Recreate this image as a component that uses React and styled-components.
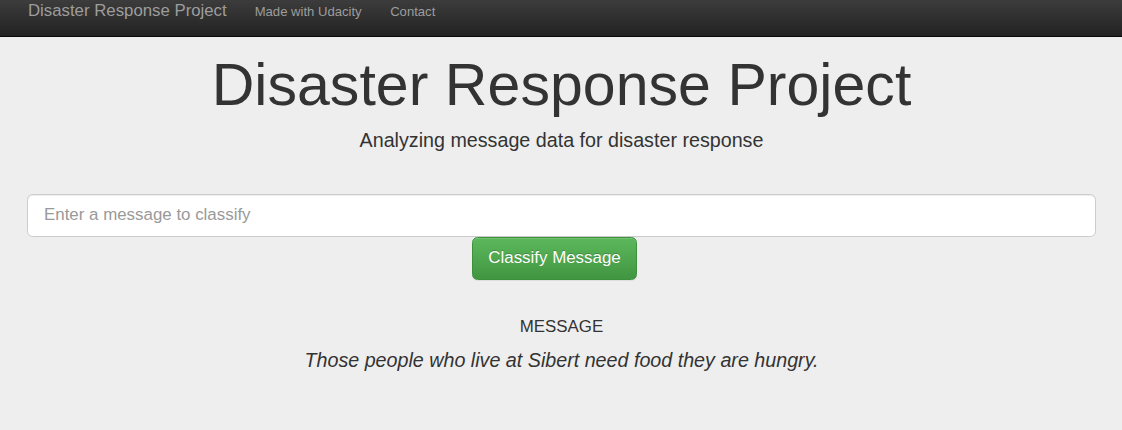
import React from "react";
import styled, { createGlobalStyle } from "styled-components";

const Global = createGlobalStyle`
  html, body {
    margin: 0;
    padding: 0;
    background: #eeeeee;
    font-family: "Liberation Sans", Arial, sans-serif;
    color: #333333;
  }
  * { box-sizing: border-box; }
`;

const Navbar = styled.nav`
  height: 37px;
  background: linear-gradient(to bottom, #3c3c3c 0%, #222222 100%);
  border-bottom: 1px solid #080808;
  display: flex;
  align-items: flex-start;
  padding: 1px 0 0 28px;
`;

const Brand = styled.a`
  font-size: 16.8px;
  line-height: 20px;
  color: #9d9d9d;
  text-decoration: none;
  padding-right: 14px;
`;

const NavLink = styled.a`
  font-size: 13.1px;
  line-height: 20px;
  margin-top: 1px;
  color: #9d9d9d;
  text-decoration: none;
  padding: 0 14.5px 0 14px;
`;

const Jumbotron = styled.section`
  padding: 16px 26px 0 27px;
  text-align: center;
`;

const Title = styled.h1`
  margin: 0;
  font-size: 59px;
  line-height: 1.1;
  font-weight: 400;
  color: #333333;
  letter-spacing: 0.05px;
`;

const Lead = styled.p`
  margin: 9.5px 0 0;
  font-size: 19.7px;
  line-height: 1.4;
  color: #333333;
`;

const Form = styled.form`
  margin-top: 39px;
  display: flex;
  flex-direction: column;
  align-items: center;
`;

const Input = styled.input`
  width: 100%;
  height: 43px;
  padding: 0 16px;
  font-family: "Liberation Sans", Arial, sans-serif;
  font-size: 16.9px;
  color: #555555;
  background: #ffffff;
  border: 1px solid #cccccc;
  border-radius: 5.6px;
  box-shadow: inset 0 1px 1px rgba(0, 0, 0, 0.075);
  outline: none;
  &::placeholder { color: #999999; }
`;

const Button = styled.button`
  height: 43px;
  width: 165px;
  margin-right: 14px;
  font-family: "Liberation Sans", Arial, sans-serif;
  font-size: 16.9px;
  color: #ffffff;
  background: linear-gradient(to bottom, #5cb85c 0%, #419641 100%);
  border: 1px solid #3e8f3e;
  border-radius: 5.6px;
  text-shadow: 0 -1px 0 rgba(0, 0, 0, 0.2);
  box-shadow: inset 0 1px 0 rgba(255, 255, 255, 0.15), 0 1px 1px rgba(0, 0, 0, 0.075);
  padding: 0;
  cursor: pointer;
`;

const Result = styled.div`
  margin-top: 38px;
  text-align: center;
`;

const Label = styled.h4`
  margin: 0;
  font-size: 16.9px;
  line-height: 1.1;
  font-weight: 400;
  color: #333333;
`;

const Message = styled.h3`
  margin: 13px 0 0;
  font-size: 19.7px;
  line-height: 1.1;
  font-weight: 400;
  font-style: italic;
  color: #333333;
`;

export default function App() {
  return (
    <>
      <Global />
      <Navbar>
        <Brand href="#">Disaster Response Project</Brand>
        <NavLink href="#">Made with Udacity</NavLink>
        <NavLink href="#">Contact</NavLink>
      </Navbar>
      <Jumbotron>
        <Title>Disaster Response Project</Title>
        <Lead>Analyzing message data for disaster response</Lead>
        <Form onSubmit={(e) => e.preventDefault()}>
          <Input type="text" placeholder="Enter a message to classify" />
          <Button type="submit">Classify Message</Button>
        </Form>
        <Result>
          <Label>MESSAGE</Label>
          <Message>Those people who live at Sibert need food they are hungry.</Message>
        </Result>
      </Jumbotron>
    </>
  );
}
